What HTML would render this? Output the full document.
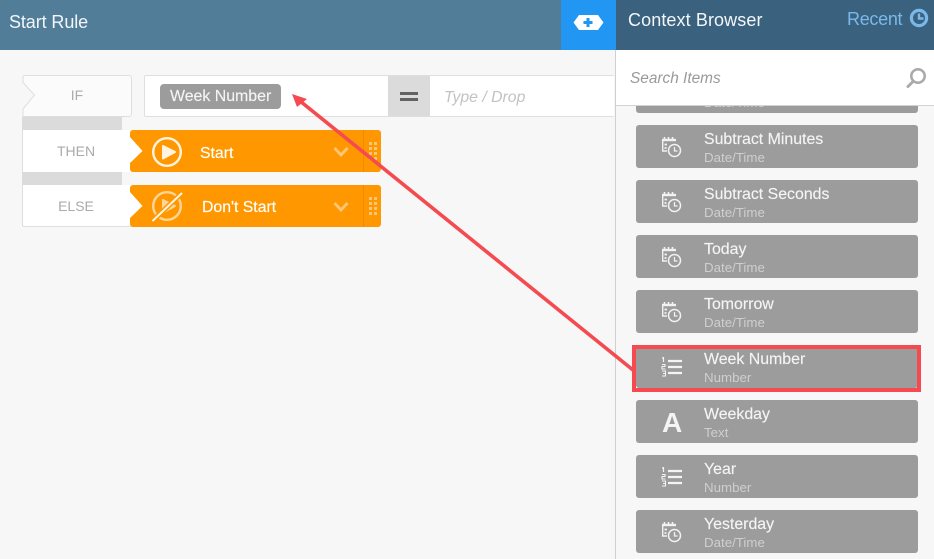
<!DOCTYPE html>
<html><head><meta charset="utf-8">
<style>
html,body{margin:0;padding:0;width:934px;height:559px;overflow:hidden;background:#f7f7f7;font-family:"Liberation Sans",sans-serif}
.a{position:absolute}
#root{position:relative;width:934px;height:559px;overflow:hidden}
.t{position:absolute;white-space:nowrap}
.item{position:absolute;left:636px;width:282px;height:43px;background:#9c9c9c;border-radius:3px}
.item .n{position:absolute;left:68px;top:6px;font-size:15.900px;-webkit-text-stroke:.15px #f4f4f4;color:#f4f4f4;white-space:nowrap;line-height:18px}
.item .s{position:absolute;left:68px;top:25px;font-size:13.300px;color:#cfcfcf;white-space:nowrap;line-height:16px}
.item svg{position:absolute;left:22px;top:8px}
.lbl{font-size:14px;color:#aaa;text-align:center;line-height:42px}
.or{position:absolute;left:130px;width:251px;height:42px;background:#ff9800;border-radius:3px}
</style></head><body><div id="root">
<div class="a" style="left:0;top:0;width:561px;height:50px;background:#527d99"></div>
<div class="t" style="left:9px;top:11px;font-size:18px;line-height:22px;letter-spacing:-.1px;color:#f2f6f8">Start Rule</div>
<div class="a" style="left:561px;top:0;width:55px;height:50px;background:#2196f3"></div>
<svg class="a" style="left:573px;top:13.500px" width="32" height="18" viewBox="0 0 32 18"><path d="M6 1H25L30.500 8.500 25 16H6L.5 8.500Z" fill="#fff"/><path d="M15 4V13M10.500 8.500H19.500" stroke="#2196f3" stroke-width="3" fill="none"/></svg>
<div class="a" style="left:616px;top:0;width:318px;height:50px;background:#3a627f"></div>
<div class="t" style="left:628px;top:9px;font-size:18px;line-height:22px;color:#f3f6f8;letter-spacing:.1px">Context Browser</div>
<div class="t" style="left:847px;top:8px;font-size:18px;line-height:22px;letter-spacing:-.3px;color:#7ab8ea">Recent</div>
<svg class="a" style="left:909px;top:8px" width="20" height="20" viewBox="0 0 20 20"><circle cx="10" cy="10" r="7.600" fill="none" stroke="#7ab8ea" stroke-width="3.200"/><path d="M10 5.500V10.500H14.500" fill="none" stroke="#7ab8ea" stroke-width="2.400"/></svg>

<!-- canvas -->
<svg class="a" style="left:22px;top:75px" width="110" height="43" viewBox="0 0 110 43"><path d="M3 .5H107a2.500 2.500 0 0 1 2.500 2.500V39a2.500 2.500 0 0 1-2.500 2.500H1V34L12.500 20 1 7.500V2.500A2 2 0 0 1 3 .5Z" fill="#fbfbfb" stroke="#dedede"/></svg>
<div class="t lbl" style="left:22px;top:74px;width:110px">IF</div>
<div class="a" style="left:144px;top:75px;width:469px;height:40px;background:#fff;border:1px solid #dfdfdf;border-right:none;box-sizing:content-box;border-radius:2px 0 0 2px"></div>
<div class="a" style="left:160px;top:84px;width:121px;height:25px;background:#9c9c9c;border-radius:4px"></div>
<div class="t" style="left:170px;top:88px;font-size:15.900px;line-height:18px;-webkit-text-stroke:.15px #f4f4f4;color:#f4f4f4">Week Number</div>
<div class="a" style="left:388px;top:76px;width:42px;height:40px;background:#dbdbdb"></div>
<div class="a" style="left:400px;top:92px;width:18px;height:3px;background:#626262"></div>
<div class="a" style="left:400px;top:98px;width:18px;height:3px;background:#626262"></div>
<div class="t" style="left:444px;top:88.500px;font-size:15.800px;line-height:18px;color:#c2c2c2;font-style:italic">Type / Drop</div>

<div class="a" style="left:22px;top:117px;width:100px;height:13px;background:#dbdbdb"></div>
<div class="a" style="left:22px;top:172px;width:100px;height:13px;background:#dbdbdb"></div>
<div class="a" style="left:22px;top:130px;width:109px;height:42px;background:#fff;border-left:1px solid #dedede;box-sizing:border-box"></div>
<div class="t lbl" style="left:22px;top:129.500px;width:108px">THEN</div>
<div class="a" style="left:22px;top:185px;width:109px;height:42px;background:#fff;border-left:1px solid #dedede;border-bottom:1px solid #dedede;border-radius:0 0 0 2px;box-sizing:border-box"></div>
<div class="t lbl" style="left:22px;top:184.500px;width:108px">ELSE</div>
<div class="or" style="top:130px"></div>
<div class="or" style="top:185px"></div>
<svg class="a" style="left:130px;top:130px" width="16" height="42" viewBox="0 0 16 42"><path d="M0 7 12.500 21 0 33Z" fill="#fff"/></svg>
<svg class="a" style="left:130px;top:185px" width="16" height="42" viewBox="0 0 16 42"><path d="M0 7 12.500 21 0 33Z" fill="#fff"/></svg>
<svg class="a" style="left:151px;top:136px" width="32" height="32" viewBox="0 0 32 32"><circle cx="16" cy="16" r="13.800" fill="none" stroke="#fff4e2" stroke-width="2.400"/><path d="M12 10 24 16 12 22.500Z" fill="#fff4e2" stroke="#fff4e2" stroke-width="2" stroke-linejoin="round"/></svg>
<svg class="a" style="left:151px;top:190px" width="32" height="32" viewBox="0 0 32 32"><g opacity=".6"><circle cx="16" cy="16" r="13.800" fill="none" stroke="#fff" stroke-width="2.400"/><path d="M12 10 24 16 12 22.500Z" fill="#fff" stroke="#fff" stroke-width="2" stroke-linejoin="round"/></g><path d="M1.500 31 31 3" stroke="#ff9800" stroke-width="5"/><path d="M1.500 31 31 3" stroke="#fff4e2" stroke-width="2"/></svg>
<div class="t" style="left:200px;top:144.500px;font-size:15.800px;line-height:18px;-webkit-text-stroke:.15px #fff;color:#fff">Start</div>
<div class="t" style="left:202px;top:198.500px;font-size:15.800px;line-height:18px;-webkit-text-stroke:.15px #fff;color:#fff">Don't Start</div>
<svg class="a" style="left:333px;top:146px" width="16" height="12" viewBox="0 0 16 12"><path d="M1.500 2 8 9 14.500 2" fill="none" stroke="#ffc777" stroke-width="2.800"/></svg>
<svg class="a" style="left:333px;top:201px" width="16" height="12" viewBox="0 0 16 12"><path d="M1.500 2 8 9 14.500 2" fill="none" stroke="#ffc777" stroke-width="2.800"/></svg>
<div class="a" style="left:363px;top:130px;width:1px;height:42px;background:#f08a00"></div>
<div class="a" style="left:363px;top:185px;width:1px;height:42px;background:#f08a00"></div>
<svg class="a" style="left:369px;top:142px" width="10" height="20" viewBox="0 0 10 20" fill="#ffc777"><path d="M0 0h3v3H0zM5 0h3v3H5zM0 5h3v3H0zM5 5h3v3H5zM0 10h3v3H0zM5 10h3v3H5zM0 15h3v3H0zM5 15h3v3H5z"/></svg>
<svg class="a" style="left:369px;top:197px" width="10" height="20" viewBox="0 0 10 20" fill="#ffc777"><path d="M0 0h3v3H0zM5 0h3v3H5zM0 5h3v3H0zM5 5h3v3H5zM0 10h3v3H0zM5 10h3v3H5zM0 15h3v3H0zM5 15h3v3H5z"/></svg>

<!-- panel -->
<div class="a" style="left:615px;top:50px;width:1px;height:509px;background:#cfcfcf"></div>
<div class="item" style="top:70px"><div class="s">Date/Time</div></div>
<div class="a" style="left:616px;top:50px;width:318px;height:55px;background:#fff"></div>
<div class="a" style="left:616px;top:105px;width:318px;height:1px;background:#d2d2d2"></div>
<div class="t" style="left:630px;top:69.500px;font-size:15.400px;line-height:18px;color:#9a9a9a;font-style:italic">Search Items</div>
<svg class="a" style="left:905px;top:67px" width="22" height="22" viewBox="0 0 22 22"><circle cx="13" cy="9" r="6.700" fill="none" stroke="#aaa" stroke-width="2.600"/><path d="M8 14.500 3 19.500" stroke="#aaa" stroke-width="3" stroke-linecap="round"/></svg>

<div class="item" style="top:125px"><svg width="26" height="26" viewBox="0 0 26 26"><use href="#cal"/></svg><div class="n">Subtract Minutes</div><div class="s">Date/Time</div></div>
<div class="item" style="top:180px"><svg width="26" height="26" viewBox="0 0 26 26"><use href="#cal"/></svg><div class="n">Subtract Seconds</div><div class="s">Date/Time</div></div>
<div class="item" style="top:235px"><svg width="26" height="26" viewBox="0 0 26 26"><use href="#cal"/></svg><div class="n">Today</div><div class="s">Date/Time</div></div>
<div class="item" style="top:290px"><svg width="26" height="26" viewBox="0 0 26 26"><use href="#cal"/></svg><div class="n">Tomorrow</div><div class="s">Date/Time</div></div>
<div class="item" style="top:345px"><svg width="26" height="26" viewBox="0 0 26 26"><use href="#lst"/></svg><div class="n">Week Number</div><div class="s">Number</div></div>
<div class="item" style="top:400px"><div class="t" style="left:26px;top:6px;font-size:28px;line-height:34px;font-weight:bold;color:#f4f4f4">A</div><div class="n">Weekday</div><div class="s">Text</div></div>
<div class="item" style="top:455px"><svg width="26" height="26" viewBox="0 0 26 26"><use href="#lst"/></svg><div class="n">Year</div><div class="s">Number</div></div>
<div class="item" style="top:510px"><svg width="26" height="26" viewBox="0 0 26 26"><use href="#cal"/></svg><div class="n">Yesterday</div><div class="s">Date/Time</div></div>

<svg width="0" height="0" style="position:absolute"><defs>
<g id="cal" fill="none" stroke="#f2f2f2"><path d="M4.700 7V18H9" stroke-width="1.400"/><path d="M4 7H18" stroke-width="2.400"/><path d="M6.500 4v2M10.500 4v2M14.500 4v2" stroke-width="1.600"/><path d="M6.500 11.500h2.500M6.500 15h2" stroke-width="1.700"/><circle cx="16.500" cy="17.500" r="6" stroke-width="1.500" fill="#9c9c9c"/><path d="M16.500 14V18H19.500" stroke-width="1.300"/></g>
<g id="lst" fill="none" stroke="#f4f4f4"><path d="M10 8H24M10 14H24M10 20H24" stroke-width="2.200"/><path d="M5.500 4V9M4 5H5.500" stroke-width="1.200"/><path d="M4 11.500H7V13.500H4V16H7.500M4 18H7.500V23H4M5 20.500H7.500" stroke-width="1.100"/></g>
</defs></svg>

<!-- annotations -->
<svg class="a" style="left:0;top:0" width="934" height="559" viewBox="0 0 934 559"><path d="M300 101 633 370" stroke="#f54a4f" stroke-width="3.600" fill="none"/><path d="M292 94 307 99 297 107Z" fill="#f54a4f"/><rect x="634" y="347" width="285" height="43" fill="none" stroke="#f54a4f" stroke-width="4"/></svg>
</div></body></html>
